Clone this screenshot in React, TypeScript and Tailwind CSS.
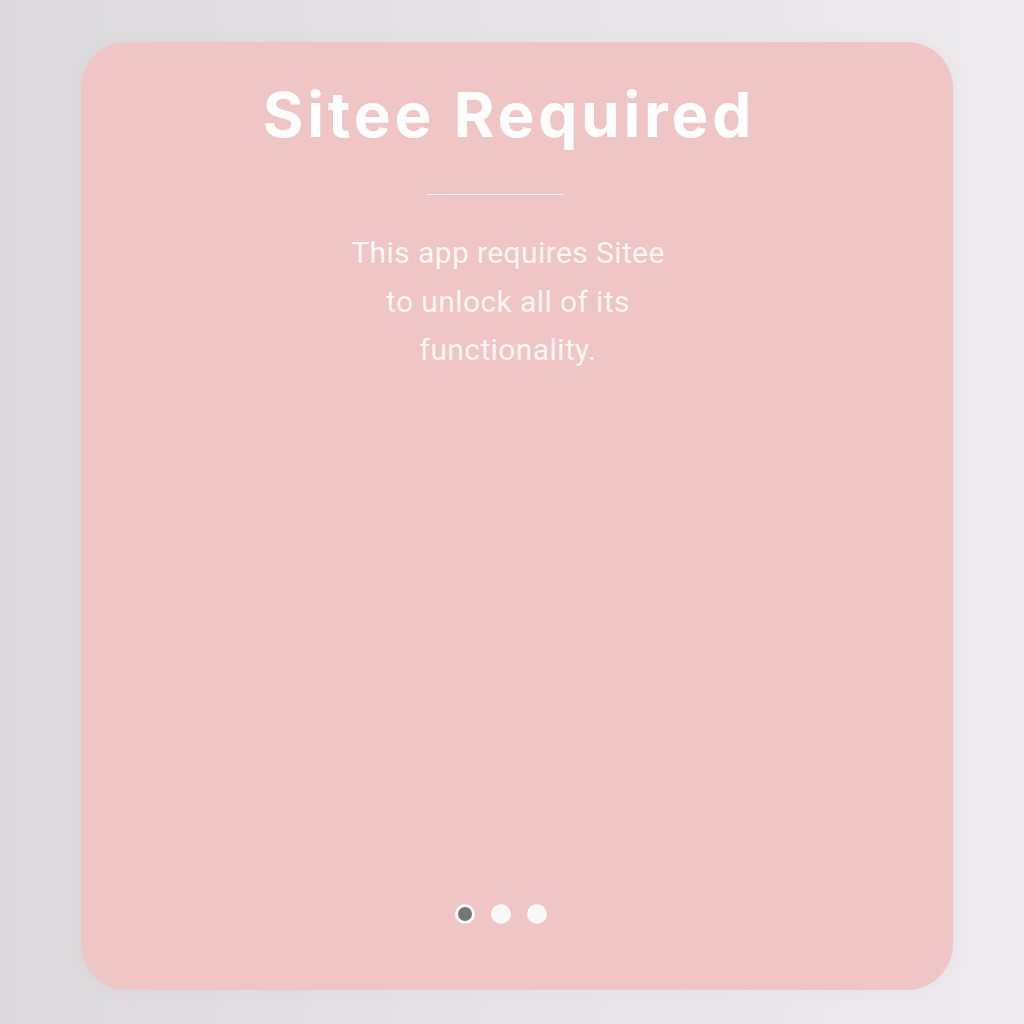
export default function App() {
  return (
    <div className="h-screen w-full bg-[linear-gradient(90deg,#dcd9dc_0%,#e6e4e6_50%,#edebed_100%)] pl-[81px] pr-[71px] pt-[42px] pb-[34px]">
      <div className="flex h-full flex-col items-center rounded-[46px] bg-[#efc5c6] shadow-[0_0_20px_rgba(0,0,0,0.03)]">
        <h1 className="mr-[16px] mt-[28px] font-['Inter',sans-serif] text-[62px] font-bold leading-[90px] tracking-[3.8px] text-white">
          Sitee Required
        </h1>
        <div className="mr-[44px] mt-[34px] h-px w-[136px] bg-white/90" />
        <p className="mr-[18px] mt-[34px] w-[330px] text-center font-['Roboto',sans-serif] text-[30px] leading-[48.5px] tracking-[0.4px] text-[#fff6f6]">
          This app requires Sitee to unlock all of its functionality.
        </p>
        <div className="mt-auto mb-[66px] mr-[32px] flex items-center gap-[16px]">
          <span className="flex h-[20px] w-[20px] items-center justify-center rounded-full bg-[#f8f8fa]">
            <span className="h-[14px] w-[14px] rounded-full bg-[#737874]" />
          </span>
          <span className="h-[20px] w-[20px] rounded-full bg-[#f8f8fa]" />
          <span className="h-[20px] w-[20px] rounded-full bg-[#f8f8fa]" />
        </div>
      </div>
    </div>
  );
}
